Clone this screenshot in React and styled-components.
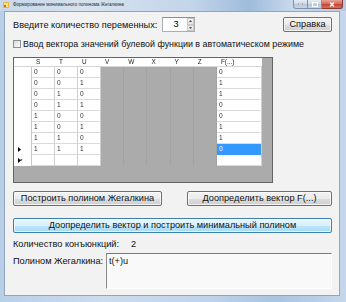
import React from "react";
import styled, { createGlobalStyle } from "styled-components";

const GlobalStyle = createGlobalStyle`
  html, body {
    margin: 0;
    padding: 0;
  }
  body {
    width: 346px;
    height: 302px;
    overflow: hidden;
    font-family: "Liberation Sans", Arial, sans-serif;
    color: #000;
  }
`;

const Window = styled.div`
  width: 346px;
  height: 302px;
  box-sizing: border-box;
  display: flex;
  flex-direction: column;
  padding: 0 6px 6px 4px;
  background: linear-gradient(90deg, #b9cfe7 0%, #cddcec 30%, #bfd3ea 60%, #a9c3e0 80%, #c4d7ec 100%);
`;

const TitleBar = styled.div`
  height: 11px;
  display: flex;
  align-items: flex-start;
  margin-left: -4px;
  margin-right: -6px;
  padding-left: 3px;
  background: linear-gradient(90deg, #c7d8ea 0%, #d6e2ee 25%, #c3d5ea 55%, #9fbcdc 72%, #c9daec 85%, #b3cae4 100%);
`;

const TitleIcon = styled.svg`
  width: 6px;
  height: 6px;
  margin-top: 2px;
`;

const TitleText = styled.span`
  font-size: 4.6px;
  line-height: 10px;
  margin-left: 4px;
  color: #1e2b3a;
  white-space: nowrap;
`;

const Caption = styled.div`
  margin-left: auto;
  margin-right: 3px;
  display: flex;
  height: 9px;
`;

const CaptionButton = styled.div`
  width: ${(p) => p.$w}px;
  height: 9px;
  box-sizing: border-box;
  border: 1px solid ${(p) => (p.$close ? "#8a3a35" : "#7f93ad")};
  border-top: none;
  border-left-width: ${(p) => (p.$first ? 1 : 0)}px;
  border-radius: ${(p) => (p.$first ? "0 0 0 3px" : p.$close ? "0 0 3px 0" : "0")};
  background: ${(p) =>
    p.$close
      ? "linear-gradient(#e8a293 0%, #d2685a 50%, #c3432f 51%, #d5705c 100%)"
      : "linear-gradient(#e4ecf5 0%, #cdd9e7 50%, #b5c6da 51%, #c8d6e6 100%)"};
  display: flex;
  align-items: center;
  justify-content: center;
`;

const Client = styled.div`
  flex: 1;
  display: flex;
  flex-direction: column;
  background: #f2f2f2;
  border: 1px solid #8ea6c2;
  padding: 5px 7px 0 8px;
`;

const TopRow = styled.div`
  height: 15px;
  display: flex;
  align-items: center;
`;

const Label = styled.span`
  font-size: ${(p) => p.$fs || 9.2}px;
  line-height: 12px;
  white-space: nowrap;
  color: #111;
`;

const Spinner = styled.div`
  margin-left: 5px;
  width: 33px;
  height: 15px;
  box-sizing: border-box;
  border: 1px solid #abadb3;
  border-top-color: #8d8f96;
  background: #fff;
  display: flex;
`;

const SpinValue = styled.span`
  flex: 1;
  font-size: 9.2px;
  line-height: 13px;
  padding-left: 10px;
`;

const SpinArrows = styled.div`
  width: 7px;
  display: flex;
  flex-direction: column;
`;

const SpinArrow = styled.div`
  flex: 1;
  box-sizing: border-box;
  border: 1px solid #c9c9c9;
  background: linear-gradient(#f6f6f6, #e2e2e2);
  display: flex;
  align-items: center;
  justify-content: center;
`;

const Button = styled.button`
  box-sizing: border-box;
  width: ${(p) => (p.$w ? `${p.$w}px` : "100%")};
  height: 15px;
  margin: 0;
  padding: 0;
  border: 1px solid ${(p) => (p.$hot ? "#3c7fb1" : "#707070")};
  border-radius: 2px;
  font-family: "Liberation Sans", Arial, sans-serif;
  font-size: 9.2px;
  line-height: 13px;
  color: #111;
  white-space: nowrap;
  background: ${(p) =>
    p.$hot
      ? "linear-gradient(#eaf6fd 0%, #d9f0fc 50%, #bee6fd 51%, #a7d9f5 100%)"
      : "linear-gradient(#f2f2f2 0%, #ebebeb 50%, #dddddd 51%, #cfcfcf 100%)"};
  box-shadow: inset 0 0 0 1px rgba(255, 255, 255, 0.7);
`;

const HelpButton = styled(Button)`
  margin-left: auto;
`;

const CheckRow = styled.div`
  margin-top: 7px;
  height: 9px;
  display: flex;
  align-items: center;
`;

const CheckBox = styled.span`
  width: 8px;
  height: 8px;
  box-sizing: border-box;
  border: 1px solid #8e8f8f;
  background: linear-gradient(135deg, #dcdcdc, #fafafa);
  margin-right: 2px;
  flex-shrink: 0;
`;

const GridBox = styled.div`
  margin-top: 9px;
  width: 260px;
  height: 126px;
  box-sizing: border-box;
  border: 1px solid #646464;
  background: #ababab;
  overflow: hidden;
`;

const Table = styled.div`
  display: grid;
  grid-template-columns: 18px 23px 23px 23px repeat(5, 23.2px) 45px;
  grid-template-rows: 9px;
  grid-auto-rows: 11px;
  width: 248px;
`;

const HeadCell = styled.div`
  background: #fff;
  border-bottom: 1px solid #d6d6d6;
  box-sizing: border-box;
  font-size: 6.4px;
  line-height: 8px;
  padding-left: 4px;
  color: #222;
  white-space: nowrap;
  filter: grayscale(1);
`;

const RowHead = styled.div`
  background: #fff;
  box-sizing: border-box;
  border-right: 1px solid #c8c8c8;
  display: flex;
  align-items: center;
  padding-left: 4px;
  font-size: 7px;
  color: #000;
`;

const Cell = styled.div`
  box-sizing: border-box;
  border-right: 1px solid ${(p) => (p.$kind === "gray" ? "#a2a2a2" : "#cfcfcf")};
  border-bottom: 1px solid ${(p) => (p.$kind === "gray" ? "#ababab" : p.$kind === "sel" ? "#3399ff" : "#dadada")};
  background: ${(p) => (p.$kind === "gray" ? "#ababab" : p.$kind === "sel" ? "#3399ff" : "#fff")};
  color: ${(p) => (p.$kind === "sel" ? "#fff" : "#333")};
  font-size: 6.6px;
  line-height: 10px;
  padding-left: 2px;
  filter: ${(p) => (p.$kind === "sel" ? "none" : "grayscale(1)")};
`;

const ButtonRow = styled.div`
  margin-top: 8px;
  display: flex;
  justify-content: space-between;
`;

const WideRow = styled.div`
  margin-top: 8px;
`;

const CountRow = styled.div`
  margin-top: 5px;
  height: 12px;
  display: flex;
  align-items: center;
`;

const CountValue = styled(Label)`
  margin-left: 12px;
`;

const PolyRow = styled.div`
  margin-top: 3px;
  display: flex;
`;

const PolyLabel = styled(Label)`
  width: 93px;
  padding-top: 2px;
`;

const PolyBox = styled.div`
  width: 226px;
  height: 36px;
  box-sizing: border-box;
  border-top: 1px solid #7a7a7a;
  border-left: 1px solid #8a8a8a;
  border-right: 1px solid #fff;
  border-bottom: 1px solid #fff;
  background: #f9f9f9;
  font-size: 9.2px;
  line-height: 12px;
  padding: 1px 0 0 2px;
  color: #111;
`;

const columns = ["", "S", "T", "U", "V", "W", "X", "Y", "Z", "F(...)"];
const rows = [
  [0, 0, 0, 0],
  [0, 0, 1, 1],
  [0, 1, 0, 1],
  [0, 1, 1, 0],
  [1, 0, 0, 0],
  [1, 0, 1, 1],
  [1, 1, 0, 1],
  [1, 1, 1, 0],
];
const selectedRow = 7;

const Triangle = () => (
  <svg width="3" height="5" viewBox="0 0 3 5">
    <path d="M0 0 L3 2.5 L0 5 Z" fill="#000" />
  </svg>
);

const DataGrid = () => (
  <GridBox>
    <Table>
      {columns.map((c, i) => (
        <HeadCell key={`h${i}`}>{c}</HeadCell>
      ))}
      {rows.map((r, ri) => (
        <React.Fragment key={ri}>
          <RowHead>{ri === selectedRow && <Triangle />}</RowHead>
          {r.slice(0, 3).map((v, ci) => (
            <Cell key={ci}>{v}</Cell>
          ))}
          {[0, 1, 2, 3, 4].map((g) => (
            <Cell key={`g${g}`} $kind="gray" />
          ))}
          <Cell $kind={ri === selectedRow ? "sel" : undefined}>{r[3]}</Cell>
        </React.Fragment>
      ))}
      <RowHead>
        <Triangle />
        <span style={{ fontSize: 6, marginLeft: -1 }}>*</span>
      </RowHead>
      <Cell />
      <Cell />
      <Cell />
      {[0, 1, 2, 3, 4].map((g) => (
        <Cell key={`ng${g}`} $kind="gray" />
      ))}
      <Cell />
    </Table>
  </GridBox>
);

export default function App() {
  return (
    <>
      <GlobalStyle />
      <Window>
        <TitleBar>
          <TitleIcon viewBox="0 0 6 6">
            <rect x="0" y="0" width="6" height="6" rx="1" fill="#e9b33c" />
            <rect x="1" y="1" width="4" height="4" fill="#f7e08a" />
            <rect x="1" y="3" width="2" height="2" fill="#c76b1f" />
          </TitleIcon>
          <TitleText>Формирование минимального полинома Жегалкина</TitleText>
          <Caption>
            <CaptionButton $w={15} $first>
              <svg width="5" height="2" viewBox="0 0 5 2">
                <rect width="5" height="2" fill="#fff" stroke="#3a4a60" strokeWidth="0.5" />
              </svg>
            </CaptionButton>
            <CaptionButton $w={14}>
              <svg width="6" height="5" viewBox="0 0 6 5">
                <rect x="0.5" y="0.5" width="5" height="4" fill="none" stroke="#fff" strokeWidth="1" />
              </svg>
            </CaptionButton>
            <CaptionButton $w={21} $close>
              <svg width="6" height="5" viewBox="0 0 6 5">
                <path d="M1 0.5 L5 4.5 M5 0.5 L1 4.5" stroke="#fff" strokeWidth="1.3" />
              </svg>
            </CaptionButton>
          </Caption>
        </TitleBar>
        <Client>
          <TopRow>
            <Label>Введите количество переменных:</Label>
            <Spinner>
              <SpinValue>3</SpinValue>
              <SpinArrows>
                <SpinArrow>
                  <svg width="3" height="2" viewBox="0 0 3 2">
                    <path d="M0 2 L1.5 0 L3 2 Z" fill="#444" />
                  </svg>
                </SpinArrow>
                <SpinArrow>
                  <svg width="3" height="2" viewBox="0 0 3 2">
                    <path d="M0 0 L1.5 2 L3 0 Z" fill="#444" />
                  </svg>
                </SpinArrow>
              </SpinArrows>
            </Spinner>
            <HelpButton $w={49}>Справка</HelpButton>
          </TopRow>
          <CheckRow>
            <CheckBox />
            <Label $fs={8.9}>Ввод вектора значений булевой функции в автоматическом режиме</Label>
          </CheckRow>
          <DataGrid />
          <ButtonRow>
            <Button $w={149}>Построить полином Жегалкина</Button>
            <Button $w={145}>Доопределить вектор F(...)</Button>
          </ButtonRow>
          <WideRow>
            <Button $hot>Доопределить вектор и построить минимальный полином</Button>
          </WideRow>
          <CountRow>
            <Label>Количество конъюнкций:</Label>
            <CountValue>2</CountValue>
          </CountRow>
          <PolyRow>
            <PolyLabel>Полином Жегалкина:</PolyLabel>
            <PolyBox>t(+)u</PolyBox>
          </PolyRow>
        </Client>
      </Window>
    </>
  );
}
